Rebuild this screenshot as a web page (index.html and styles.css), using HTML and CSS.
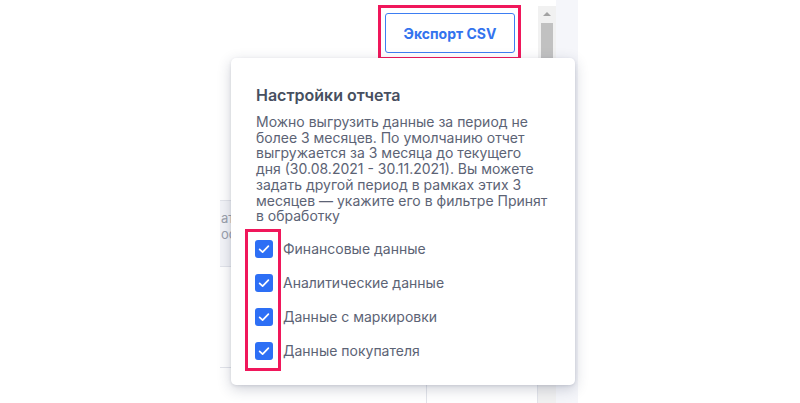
FILE: index.html
```html
<!DOCTYPE html>
<html lang="ru">
<head>
<meta charset="utf-8">
<title>Экспорт CSV</title>
<link rel="stylesheet" href="styles.css">
</head>
<body>
<div class="page">
  <div class="gutter"></div>
  <div class="main">
    <div class="toolbar">
      <div class="mark mark-button">
        <button class="btn-export">Экспорт CSV</button>
      </div>
    </div>
    <div class="row row-head">
      <div class="cell-head"><span>атус</span><span>особ</span></div>
    </div>
    <div class="row row-body"></div>
    <div class="row row-foot">
      <div class="cell-a"></div>
      <div class="cell-b"></div>
    </div>
  </div>
  <div class="scrollbar">
    <div class="scroll-arrow"></div>
    <div class="scroll-thumb"></div>
  </div>
  <div class="side"></div>
</div>

<div class="popup">
  <h2 class="popup-title">Настройки отчета</h2>
  <p class="popup-text">Можно выгрузить данные за период не более 3 месяцев. По умолчанию отчет выгружается за 3 месяца до текущего дня (30.08.2021 - 30.11.2021). Вы можете задать другой период в рамках этих 3 месяцев — укажите его в фильтре Принят в обработку</p>
  <ul class="checks">
    <li class="check"><span class="box"><svg viewBox="0 0 18 18" width="18" height="18"><polyline points="4.6,9.3 7.6,12.2 13.4,6.2" fill="none" stroke="#fff" stroke-width="1.7" stroke-linecap="round" stroke-linejoin="round"/></svg></span><span class="label">Финансовые данные</span></li>
    <li class="check"><span class="box"><svg viewBox="0 0 18 18" width="18" height="18"><polyline points="4.6,9.3 7.6,12.2 13.4,6.2" fill="none" stroke="#fff" stroke-width="1.7" stroke-linecap="round" stroke-linejoin="round"/></svg></span><span class="label">Аналитические данные</span></li>
    <li class="check"><span class="box"><svg viewBox="0 0 18 18" width="18" height="18"><polyline points="4.6,9.3 7.6,12.2 13.4,6.2" fill="none" stroke="#fff" stroke-width="1.7" stroke-linecap="round" stroke-linejoin="round"/></svg></span><span class="label">Данные с маркировки</span></li>
    <li class="check"><span class="box"><svg viewBox="0 0 18 18" width="18" height="18"><polyline points="4.6,9.3 7.6,12.2 13.4,6.2" fill="none" stroke="#fff" stroke-width="1.7" stroke-linecap="round" stroke-linejoin="round"/></svg></span><span class="label">Данные покупателя</span></li>
  </ul>
  <div class="mark mark-checks"></div>
</div>
</body>
</html>
```

FILE: styles.css
```css
* { box-sizing: border-box; }

html, body {
  margin: 0;
  padding: 0;
}

body {
  width: 800px;
  height: 403px;
  overflow: hidden;
  position: relative;
  background: #ffffff;
  font-family: Inter, "Noto Sans", "Liberation Sans", sans-serif;
}

.page {
  display: flex;
  height: 403px;
}

.gutter {
  width: 220px;
  flex: none;
}

.main {
  width: 318px;
  flex: none;
  display: flex;
  flex-direction: column;
}

.toolbar {
  height: 200px;
  display: flex;
  justify-content: flex-end;
  align-items: flex-start;
  padding: 5px 17px 0 0;
}

.mark {
  border: 3px solid #f0175b;
}

.mark-button {
  padding: 5px 3px 4px 4px;
}

.btn-export {
  display: block;
  width: 130px;
  height: 40px;
  border: 1px solid #3d7ef2;
  border-radius: 3px;
  background: #ffffff;
  color: #3373ee;
  font-family: Inter, "Noto Sans", "Liberation Sans", sans-serif;
  font-size: 14px;
  font-weight: 700;
  padding: 0;
}

.row {
  border-top: 1px solid #e2e4ea;
}

.row-head {
  height: 66px;
  display: flex;
}

.cell-head {
  width: 100px;
  background: #f3f4f8;
  display: flex;
  flex-direction: column;
  padding: 9px 0 0 1px;
  font-size: 13px;
  line-height: 16px;
  color: #9aa0ac;
}

.row-body {
  height: 101px;
}

.row-foot {
  flex: 1;
  display: flex;
  border-right: 1px solid #e2e4ea;
}

.cell-a {
  width: 207px;
  border-right: 1px solid #e2e4ea;
}

.cell-b {
  flex: 1;
}

.scrollbar {
  width: 18px;
  flex: none;
  margin-top: 6px;
  background: #f1f1f1;
  display: flex;
  flex-direction: column;
  align-items: center;
}

.scroll-arrow {
  width: 0;
  height: 0;
  margin-top: 6px;
  border-left: 4px solid transparent;
  border-right: 4px solid transparent;
  border-bottom: 4px solid #a3a3a3;
}

.scroll-thumb {
  width: 12px;
  margin-top: 7px;
  height: 300px;
  background: #c1c1c1;
}

.side {
  width: 22px;
  flex: none;
  background: #f5f6fa;
}

/* popup overlay */
.popup {
  position: absolute;
  left: 231px;
  top: 58px;
  width: 344px;
  height: 327px;
  background: #ffffff;
  border-radius: 5px;
  box-shadow: 0 4px 14px rgba(40, 50, 80, 0.22), 0 1px 3px rgba(40, 50, 80, 0.12);
  padding: 26px 25px 0 25px;
}

.popup-title {
  margin: 0;
  font-size: 16px;
  line-height: 22px;
  font-weight: 600;
  color: #474f60;
}

.popup-text {
  margin: 8px 0 0 0;
  font-size: 14px;
  line-height: 15.7px;
  color: #5c6375;
}

.checks {
  list-style: none;
  margin: 16px 0 0 -1px;
  padding: 0;
  display: flex;
  flex-direction: column;
  gap: 16px;
}

.check {
  display: flex;
  align-items: center;
  height: 18px;
  gap: 10px;
}

.box {
  width: 18px;
  height: 18px;
  flex: none;
  background: #2d6ff5;
  border-radius: 3px;
  display: flex;
}

.label {
  font-size: 14px;
  color: #5c6375;
}

.mark-checks {
  position: absolute;
  left: 14px;
  top: 171px;
  width: 36px;
  height: 142px;
}
```
